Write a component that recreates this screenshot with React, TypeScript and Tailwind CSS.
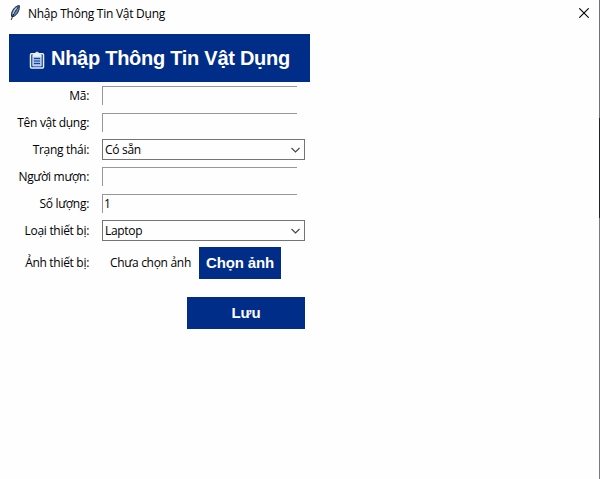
import type { ReactNode } from "react";

function FeatherIcon() {
  return (
    <svg className="h-[18px] w-[12px]" viewBox="0 0 12 18">
      <path d="M10.300 1.600C7 1.700 3.600 5 2.600 9.400L2.600 12.600l2.500-.4C8.600 10.600 10.700 5.600 10.300 1.600Z" fill="#5d83b0" stroke="#18222f" strokeWidth="1" />
      <path d="M9.200 3.200C6.600 6.400 4.400 10 2.200 16" fill="none" stroke="#121a26" strokeWidth=".9" />
      <path d="M7.600 3.800C5.800 5.600 4.600 7.600 4 9.800" fill="none" stroke="#b4cfea" strokeWidth="1.200" />
    </svg>
  );
}

function ClipboardIcon() {
  return (
    <svg className="h-[18px] w-[16px] shrink-0" viewBox="0 0 16 18" fill="none" stroke="#e8f2ff">
      <rect x="1.500" y="2.700" width="13" height="14.300" rx="1" strokeWidth="1.500" />
      <path d="M3.800 4.500h8.400v10.500H3.800z" fill="#9db8e0" strokeWidth=".8" />
      <path d="M4 3.300h2C6 .300 10 .300 10 3.300h2v2.200H4z" fill="#e8f2ff" strokeWidth=".6" />
      <path d="M5 7.500h6M5 10h6M5 12.500h6" stroke="#12409a" strokeWidth="1.100" />
    </svg>
  );
}

function Row({ label, children }: { label: string; children: ReactNode }) {
  return (
    <div className="flex h-[27px] items-center">
      <div className="w-[89px] shrink-0 text-right tracking-[-0.3px] whitespace-nowrap">{label}</div>
      <div className="ml-[13px]">{children}</div>
    </div>
  );
}

function Entry({ value = "" }: { value?: string }) {
  return (
    <div className="flex h-[19px] w-[195px] items-center border-t border-l border-[#979797] pl-px">{value}</div>
  );
}

function Combo({ value }: { value: string }) {
  return (
    <div className="flex h-[21px] w-[203px] items-center justify-between border border-[#747474] pr-[4px] pl-[2px]">
      <span className="tracking-[-0.3px]">{value}</span>
      <svg className="h-[6px] w-[9px]" viewBox="0 0 9 6" fill="none" stroke="#444" strokeWidth="1.100">
        <path d="M.5 1l4 4 4-4" />
      </svg>
    </div>
  );
}

export default function App() {
  return (
    <div className="flex h-[479px] w-[600px] overflow-hidden bg-[#fefefe] font-['Open_Sans','Noto_Sans',sans-serif] text-[12px] leading-[16px] text-black">
      <div className="flex grow flex-col">
        <header className="flex h-[34px] items-start pt-[4px] pr-[10px] pl-[9px]">
          <FeatherIcon />
          <span className="mt-[2px] ml-[7px] tracking-[-0.26px] whitespace-nowrap">Nhập Thông Tin Vật Dụng</span>
          <svg className="mt-[4px] ml-auto h-[10px] w-[10px]" viewBox="0 0 10 10" stroke="#000" strokeWidth="1.100">
            <path d="M.3.3l9.400 9.400M9.700.3L.3 9.700" />
          </svg>
        </header>
        <main className="flex flex-col">
          <h1 className="ml-[9px] flex h-[48px] w-[301px] items-center bg-[#002d87] pl-[20px] font-['Liberation_Sans',sans-serif] text-[20px] leading-[24px] font-bold whitespace-nowrap text-white">
            <span className="mt-[4px] flex"><ClipboardIcon /></span>
            <span className="ml-[6px] tracking-[-0.27px]">Nhập Thông Tin Vật Dụng</span>
          </h1>
          <Row label="Mã:"><Entry /></Row>
          <Row label="Tên vật dụng:"><Entry /></Row>
          <Row label="Trạng thái:"><Combo value="Có sẵn" /></Row>
          <Row label="Người mượn:"><Entry /></Row>
          <Row label="Số lượng:"><Entry value="1" /></Row>
          <Row label="Loại thiết bị:"><Combo value="Laptop" /></Row>
          <div className="flex h-[38px] items-center">
            <div className="w-[89px] text-right tracking-[-0.3px] whitespace-nowrap">Ảnh thiết bị:</div>
            <div className="ml-[21px] w-[89px] tracking-[-0.3px] whitespace-nowrap">Chưa chọn ảnh</div>
            <button className="h-[32px] w-[82px] bg-[#002d87] font-['Liberation_Sans',sans-serif] text-[15px] font-bold tracking-[-0.15px] whitespace-nowrap text-white">Chọn ảnh</button>
          </div>
          <button className="mt-[15px] ml-[187px] h-[32px] w-[118px] bg-[#002d87] font-['Liberation_Sans',sans-serif] text-[15px] font-bold text-white">Lưu</button>
        </main>
      </div>
      <div className="flex w-px shrink-0 flex-col">
        <div className="h-[118px] bg-[#6f7175]" />
        <div className="h-[100px] bg-[#1d2329]" />
        <div className="grow bg-[#77797b]" />
      </div>
    </div>
  );
}
